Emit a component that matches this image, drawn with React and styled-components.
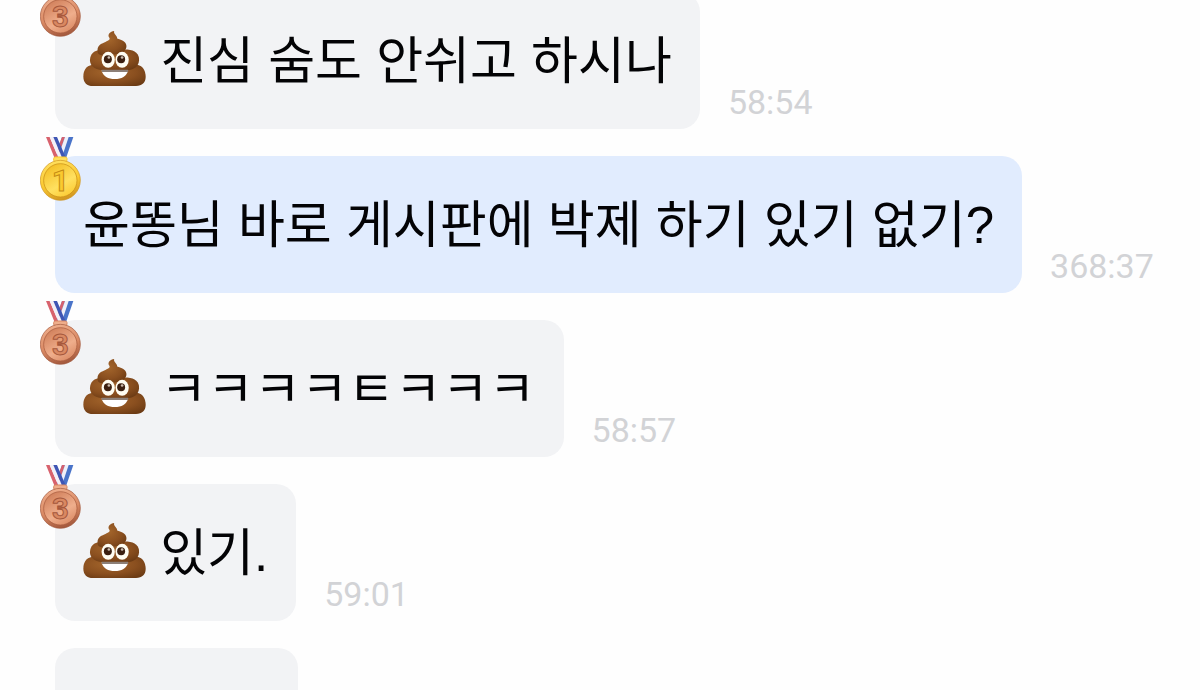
import { useId } from 'react'
import styled, { createGlobalStyle } from 'styled-components'

const GlobalStyle = createGlobalStyle`
  * {
    box-sizing: border-box;
  }
  body {
    margin: 0;
    background: #fefefe;
    color: #030305;
    font-family: 'Liberation Sans', 'Noto Sans CJK KR', sans-serif;
  }
`

const Chat = styled.main`
  height: 100vh;
  overflow: hidden;
  padding: 0 28px 0 55px;
`

const MessageList = styled.ul`
  display: flex;
  flex-direction: column;
  gap: 27px;
  margin: -8px 0 0;
  padding: 0;
  list-style: none;
`

const Message = styled.li`
  display: flex;
  align-items: flex-end;
  gap: 28px;
`

const Bubble = styled.div`
  position: relative;
  min-height: 137px;
  padding: 29px 28px 27px;
  border-radius: 20px;
  background: ${({ $highlight }) => ($highlight ? '#e1ecfe' : '#f2f3f5')};

  &:empty {
    min-width: 243px;
  }
`

const Text = styled.p`
  margin: 0;
  font-size: 51px;
  line-height: 81px;
  white-space: nowrap;
`

const Time = styled.time`
  padding-bottom: 7px;
  color: #d2d3d6;
  font-family: Roboto, sans-serif;
  font-size: 34px;
  line-height: 40px;
`

const MedalBadge = styled.svg`
  position: absolute;
  top: -19px;
  left: -15px;
  width: 41px;
  height: 64px;
`

const PoopIcon = styled.svg`
  width: 63px;
  height: 57px;
  vertical-align: -8px;
`

const medals = {
  gold: { rank: '1', light: '#ffe060', mid: '#fbc92f', dark: '#cf9420', face: '#f3bd22', ink: '#c48a14' },
  bronze: { rank: '3', light: '#efae8c', mid: '#d98862', dark: '#a0563b', face: '#cf7d58', ink: '#a5573b' },
}

function Medal({ type }) {
  const id = useId()
  const { rank, light, mid, dark, face, ink } = medals[type]

  return (
    <MedalBadge viewBox="0 0 123 192" role="img" aria-label={type}>
      <defs>
        <linearGradient id={`${id}rim`} x1="0.3" y1="0" x2="0.6" y2="1">
          <stop offset="0" stopColor={light} />
          <stop offset="0.55" stopColor={mid} />
          <stop offset="1" stopColor={dark} />
        </linearGradient>
        <linearGradient id={`${id}face`} x1="0.2" y1="0" x2="0.8" y2="1">
          <stop offset="0" stopColor={face} />
          <stop offset="0.6" stopColor={light} />
          <stop offset="1" stopColor={mid} />
        </linearGradient>
      </defs>
      <path d="M66 0H100L78 64H46Z" fill="#4a74c9" />
      <path d="M66 0H75L58 48L52 36Z" fill="#d4606e" />
      <path d="M75 0H86L66 60L58 48Z" fill="#f0f0f8" />
      <path d="M18 0H29L56 64H44Z" fill="#d8626d" />
      <path d="M29 0H40L67 64H56Z" fill="#f3f0f7" />
      <path d="M40 0H51L78 64H67Z" fill="#3f56b4" />
      <rect x="41" y="60" width="40" height="14" rx="5" fill={light} stroke={mid} strokeWidth="3" />
      <circle cx="61" cy="130" r="60" fill={`url(#${id}rim)`} stroke={dark} strokeWidth="2" />
      <circle cx="61" cy="130" r="50" fill={`url(#${id}face)`} stroke={ink} strokeWidth="2" />
      <text
        x="61"
        y="162"
        textAnchor="middle"
        fontFamily="Roboto, sans-serif"
        fontSize="88"
        fontWeight="700"
        fill={mid}
        stroke={ink}
        strokeWidth="3"
      >
        {rank}
      </text>
    </MedalBadge>
  )
}

function Poop() {
  const id = useId()

  return (
    <PoopIcon viewBox="0 0 190 170" role="img" aria-label="💩">
      <defs>
        <radialGradient id={id} cx="0.4" cy="0.35" r="0.75">
          <stop offset="0" stopColor="#a3652b" />
          <stop offset="0.6" stopColor="#8a4f1f" />
          <stop offset="1" stopColor="#6c3b14" />
        </radialGradient>
      </defs>
      <path
        d="M28 104C8 108 1 122 1 140C1 158 12 168 30 168H160C178 168 189 158 189 141C189 122 181 108 164 104Z"
        fill={`url(#${id})`}
      />
      <path
        d="M45 60C27 64 21 77 21 92C22 110 40 120 62 120H132C154 120 168 108 169 90C170 71 157 60 134 58Z"
        fill={`url(#${id})`}
      />
      <path
        d="M94 2C91 12 104 15 103 25C122 30 132 38 131 50C129 66 108 72 82 74C62 75 44 80 44 62C43 47 52 42 64 37C74 32 84 29 79 22C73 12 82 4 94 2Z"
        fill={`url(#${id})`}
      />
      <ellipse cx="76" cy="89" rx="20" ry="24" fill="#fffdf2" />
      <ellipse cx="118" cy="89" rx="20" ry="24" fill="#fffdf2" />
      <circle cx="75" cy="87" r="12" fill="#3b2011" />
      <circle cx="115" cy="87" r="12" fill="#3b2011" />
      <circle cx="78" cy="82" r="4" fill="#cbbdb0" />
      <circle cx="118" cy="82" r="4" fill="#cbbdb0" />
      <path d="M56 121H136C132 139 116 147 96 147C76 147 60 139 56 121Z" fill="#fff" />
      <path d="M56 119H136V126H57Z" fill="#8d8078" />
    </PoopIcon>
  )
}

const messages = [
  { id: 1, medal: 'bronze', poop: true, text: '진심 숨도 안쉬고 하시나', time: '58:54' },
  { id: 2, medal: 'gold', text: '윤똥님 바로 게시판에 박제 하기 있기 없기?', time: '368:37', highlight: true },
  { id: 3, medal: 'bronze', poop: true, text: 'ㅋㅋㅋㅋㅌㅋㅋㅋ', time: '58:57' },
  { id: 4, medal: 'bronze', poop: true, text: '있기.', time: '59:01' },
  { id: 5 },
]

function App() {
  return (
    <>
      <GlobalStyle />
      <Chat>
        <MessageList>
          {messages.map(({ id, medal, poop, text, time, highlight }) => (
            <Message key={id}>
              <Bubble $highlight={highlight}>
                {medal && <Medal type={medal} />}
                {text && (
                  <Text>
                    {poop && <Poop />}
                    {poop && ' '}
                    {text}
                  </Text>
                )}
              </Bubble>
              {time && <Time>{time}</Time>}
            </Message>
          ))}
        </MessageList>
      </Chat>
    </>
  )
}

export default App
